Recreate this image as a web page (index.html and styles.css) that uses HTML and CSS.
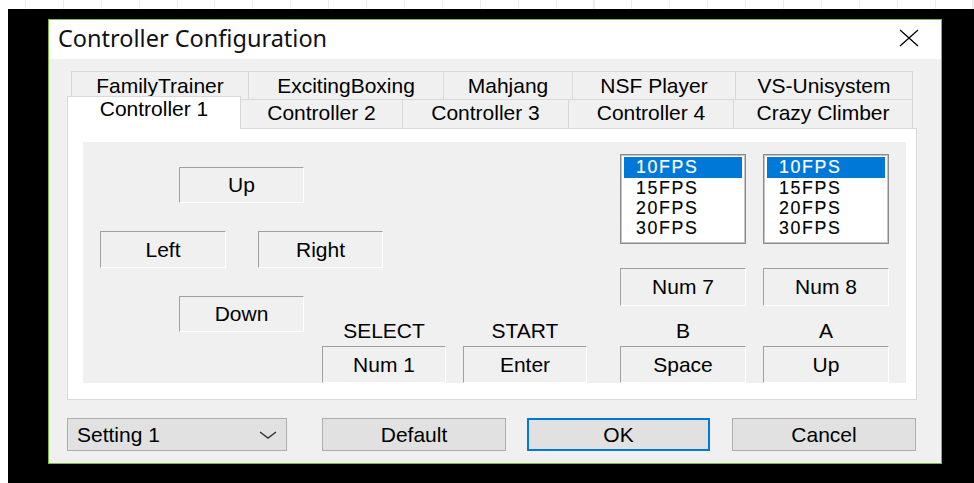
FILE: index.html
```html
<!DOCTYPE html>
<html lang="en">
<head>
<meta charset="utf-8">
<title>Controller Configuration</title>
<link rel="stylesheet" href="styles.css">
</head>
<body>
<div class="stage">
  <div class="dialog">
    <div class="titlebar">
      <span class="title">Controller Configuration</span>
      <svg class="close" width="20" height="18" viewBox="0 0 20 18" aria-hidden="true">
        <path d="M1 1 L19 17 M19 1 L1 17" stroke="#000" stroke-width="1.3" fill="none"/>
      </svg>
    </div>
    <div class="dialog-body">
      <div class="tabs">
        <div class="tab-row back">
          <div class="tab">FamilyTrainer</div>
          <div class="tab">ExcitingBoxing</div>
          <div class="tab">Mahjang</div>
          <div class="tab">NSF Player</div>
          <div class="tab">VS-Unisystem</div>
        </div>
        <div class="tab-row front">
          <div class="tab selected">Controller 1</div>
          <div class="tab">Controller 2</div>
          <div class="tab">Controller 3</div>
          <div class="tab">Controller 4</div>
          <div class="tab">Crazy Climber</div>
        </div>
      </div>
      <div class="tab-panel">
        <div class="pad-panel">
          <div class="dpad">
            <div class="key dpad-v">Up</div>
            <div class="key">Left</div>
            <div class="key">Right</div>
            <div class="key dpad-v">Down</div>
          </div>

          <ul class="listbox col-b">
            <li class="sel">10FPS</li>
            <li>15FPS</li>
            <li>20FPS</li>
            <li>30FPS</li>
          </ul>
          <ul class="listbox col-a">
            <li class="sel">10FPS</li>
            <li>15FPS</li>
            <li>20FPS</li>
            <li>30FPS</li>
          </ul>

          <div class="key col-b row-turbo">Num 7</div>
          <div class="key col-a row-turbo">Num 8</div>

          <div class="caption col-select">SELECT</div>
          <div class="caption col-start">START</div>
          <div class="caption col-b">B</div>
          <div class="caption col-a">A</div>

          <div class="key col-select row-key">Num 1</div>
          <div class="key col-start row-key">Enter</div>
          <div class="key col-b row-key">Space</div>
          <div class="key col-a row-key">Up</div>
        </div>
      </div>
      <div class="footer">
        <div class="combo">
          <span>Setting 1</span>
          <svg class="chevron" width="18" height="8" viewBox="0 0 18 8" aria-hidden="true">
            <path d="M1 1 L9 7 L17 1" stroke="#333" stroke-width="1.4" fill="none"/>
          </svg>
        </div>
        <div class="btn btn-default">Default</div>
        <div class="btn btn-ok">OK</div>
        <div class="btn">Cancel</div>
      </div>
    </div>
  </div>
</div>
</body>
</html>
```
FILE: styles.css
```css
html, body {
  margin: 0;
  padding: 0;
}

body {
  width: 974px;
  height: 483px;
  overflow: hidden;
  background: #fff repeating-linear-gradient(90deg, #ececec 0 1px, #fff 1px 37.9px);
  background-position: 25px 0;
  font-family: "Liberation Sans", Arial, sans-serif;
  font-size: 21px;
  color: #000;
}

/* black desktop area behind the dialog */
.stage {
  margin: 9px 0 0 8px;
  height: 474px;
  background: #000;
  padding: 10px 0 0 40px;
  box-sizing: border-box;
}

.dialog {
  width: 894px;
  height: 445px;
  box-sizing: border-box;
  border: 1px solid #7db843;
  background: #f0f0f0;
  display: flex;
  flex-direction: column;
}

/* title bar */
.titlebar {
  height: 39px;
  flex: none;
  background: #fff;
  display: flex;
  align-items: center;
  padding-left: 9px;
}

.title {
  font-family: "Noto Sans", "Liberation Sans", sans-serif;
  font-size: 23.5px;
  line-height: 30px;
  margin-bottom: 3px;
  color: #111;
}

.close {
  margin-left: auto;
  margin-right: 22px;
  margin-bottom: 4px;
}

.dialog-body {
  padding: 12px 24px 12px 18px;
  display: flex;
  flex-direction: column;
}

/* two-row tab strip */
.tabs {
  display: flex;
  flex-direction: column;
}

.tab-row {
  display: grid;
}

.tab-row.back {
  margin-left: 4px;
  grid-template-columns: 177px 195px 129px 163px 178px;
  grid-template-rows: 28px;
}

.tab-row.front {
  grid-template-columns: 173px 162px 166px 165px 180px;
  grid-template-rows: 29px;
  align-items: end;
}

.tab {
  box-sizing: border-box;
  height: 100%;
  background: #f0f0f0;
  border-top: 1px solid #d9d9d9;
  border-left: 1px solid #d9d9d9;
  display: flex;
  align-items: center;
  justify-content: center;
  white-space: nowrap;
}

.tab:last-child {
  border-right: 1px solid #d9d9d9;
}

.tab-row.front .tab {
  padding-bottom: 3px;
}

.tab-row.front .tab.selected {
  position: relative;
  z-index: 1;
  height: 33px;
  margin-bottom: -1px;
  background: #fff;
  border-right: 1px solid #d9d9d9;
  margin-right: -1px;
  padding: 0 0 8px 0;
}

/* tab page */
.tab-panel {
  box-sizing: border-box;
  width: 850px;
  height: 272px;
  background: #fff;
  border: 1px solid #d9d9d9;
  padding: 13px 10px 16px 15px;
}

.pad-panel {
  box-sizing: border-box;
  width: 823px;
  height: 241px;
  background: #f0f0f0;
  padding: 12px 17px 0 17px;
  display: grid;
  grid-template-columns: 222px 124px 17px 124px 33px 126px 17px 126px;
  grid-template-rows: 90px 24px 38px 40px 37px;
}

.col-select { grid-column: 2; }
.col-start  { grid-column: 4; }
.col-b      { grid-column: 6; }
.col-a      { grid-column: 8; }

.row-turbo { grid-row: 3; }
.row-key   { grid-row: 5; }

/* sunken key label boxes */
.key {
  box-sizing: border-box;
  background: #f0f0f0;
  border-top: 1px solid #a0a0a0;
  border-left: 1px solid #a0a0a0;
  border-right: 1px solid #fff;
  border-bottom: 1px solid #fff;
  display: flex;
  align-items: center;
  justify-content: center;
  white-space: nowrap;
}

.dpad {
  grid-column: 1 / 3;
  grid-row: 1 / 5;
  align-self: start;
  justify-self: start;
  margin-top: 13px;
  display: grid;
  grid-template-columns: 126px 125px;
  grid-template-rows: 36px 37px 36px;
  column-gap: 32px;
  row-gap: 28px;
}

.dpad-v {
  grid-column: 1 / 3;
  justify-self: center;
  width: 125px;
}

.caption {
  grid-row: 4;
  align-self: end;
  text-align: center;
  line-height: 20px;
  margin-bottom: 5px;
}

/* frame-rate list boxes: small type with the wide look of the system font */
.listbox {
  grid-row: 1;
  list-style: none;
  margin: 0;
  box-sizing: border-box;
  height: 90px;
  background: #fff;
  border: 1px solid #8a8a8a;
  box-shadow: inset 0 0 0 1px #c4c4c4;
  padding: 2px 3px;
  font-size: 17.8px;
  letter-spacing: 1.6px;
  -webkit-text-stroke: 0.15px currentColor;
}

.listbox li {
  height: 20px;
  line-height: 20px;
  padding-left: 12px;
}

.listbox li.sel {
  height: 21px;
  line-height: 21px;
  background: #0078d7;
  color: #fff;
}

/* bottom row */
.footer {
  margin-top: 18px;
  display: flex;
  height: 33px;
}

.combo,
.btn {
  box-sizing: border-box;
  height: 33px;
  background: #e1e1e1;
  border: 1px solid #adadad;
  display: flex;
  align-items: center;
}

.combo {
  width: 220px;
  padding: 0 9px;
  margin-right: 35px;
}

.chevron {
  margin-left: auto;
}

.btn {
  width: 184px;
  justify-content: center;
}

.btn-ok {
  width: 183px;
  margin: 0 22px 0 21px;
  border: 2px solid #0078d7;
}
```
